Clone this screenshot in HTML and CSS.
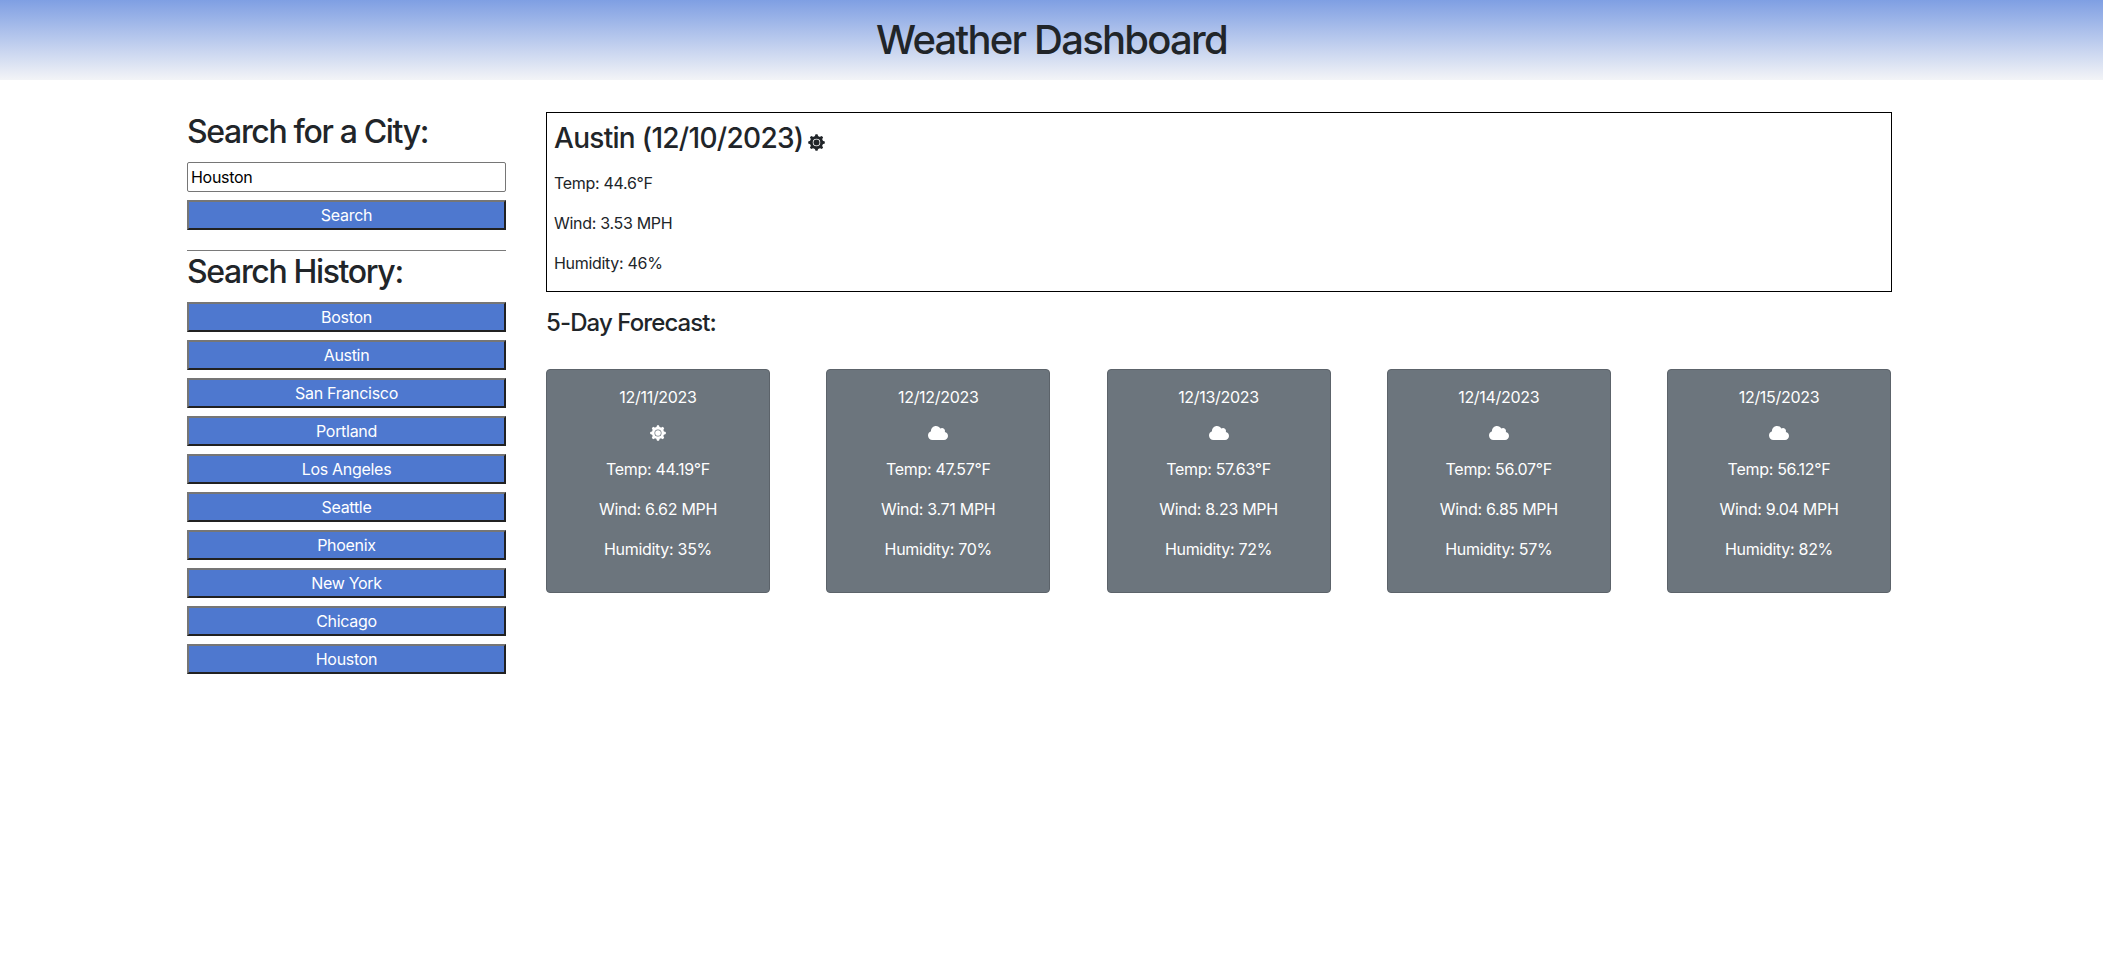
FILE: index.html
```html
<!DOCTYPE html>
<html lang="en">
<head>
    <meta charset="UTF-8">
    <meta name="viewport" content="width=device-width, initial-scale=1.0">
    <title>Weather Dashboard</title>
    <link rel="stylesheet" href="styles.css">
</head>
<body>
    <svg class="icon-defs" aria-hidden="true">
        <symbol id="sun" viewBox="0 0 512 512">
            <circle cx="256" cy="256" r="90"/>
            <circle cx="256" cy="256" r="155" fill="none" stroke="currentColor" stroke-width="84"/>
            <g id="sun-teeth">
                <path d="M226 6h60l30 84H196z"/>
                <path d="M226 6h60l30 84H196z" transform="rotate(45 256 256)"/>
                <path d="M226 6h60l30 84H196z" transform="rotate(90 256 256)"/>
                <path d="M226 6h60l30 84H196z" transform="rotate(135 256 256)"/>
                <path d="M226 6h60l30 84H196z" transform="rotate(180 256 256)"/>
                <path d="M226 6h60l30 84H196z" transform="rotate(225 256 256)"/>
                <path d="M226 6h60l30 84H196z" transform="rotate(270 256 256)"/>
                <path d="M226 6h60l30 84H196z" transform="rotate(315 256 256)"/>
            </g>
        </symbol>
        <symbol id="cloud" viewBox="0 0 640 512">
            <path d="M537.6 226.6c4.1-10.7 6.4-22.4 6.4-34.6 0-53-43-96-96-96-19.7 0-38.1 6-53.3 16.2C367 64.2 315.3 32 256 32c-88.4 0-160 71.6-160 160 0 2.7.1 5.4.2 8.1C40.2 219.8 0 273.2 0 336c0 79.5 64.5 144 144 144h368c70.7 0 128-57.3 128-128 0-61.9-44-113.6-102.4-125.4z"/>
        </symbol>
    </svg>

    <header class="page-header">
        <h1>Weather Dashboard</h1>
    </header>

    <div class="layout">
        <aside class="sidebar">
            <h2>Search for a City:</h2>
            <input class="city-input" type="text" value="Houston">
            <button class="city-btn search-btn">Search</button>
            <hr>
            <h2>Search History:</h2>
            <div class="history">
                <button class="city-btn">Boston</button>
                <button class="city-btn">Austin</button>
                <button class="city-btn">San Francisco</button>
                <button class="city-btn">Portland</button>
                <button class="city-btn">Los Angeles</button>
                <button class="city-btn">Seattle</button>
                <button class="city-btn">Phoenix</button>
                <button class="city-btn">New York</button>
                <button class="city-btn">Chicago</button>
                <button class="city-btn">Houston</button>
            </div>
        </aside>

        <main class="content">
            <section class="today">
                <h2>Austin (12/10/2023) <svg class="icon-sun-today"><use href="#sun"/></svg></h2>
                <p>Temp: 44.6°F</p>
                <p>Wind: 3.53 MPH</p>
                <p>Humidity: 46%</p>
            </section>

            <h3>5-Day Forecast:</h3>

            <div class="forecast">
                <div class="day">
                    <p>12/11/2023</p>
                    <svg class="icon icon-sun"><use href="#sun"/></svg>
                    <p>Temp: 44.19°F</p>
                    <p>Wind: 6.62 MPH</p>
                    <p>Humidity: 35%</p>
                </div>
                <div class="day">
                    <p>12/12/2023</p>
                    <svg class="icon icon-cloud"><use href="#cloud"/></svg>
                    <p>Temp: 47.57°F</p>
                    <p>Wind: 3.71 MPH</p>
                    <p>Humidity: 70%</p>
                </div>
                <div class="day">
                    <p>12/13/2023</p>
                    <svg class="icon icon-cloud"><use href="#cloud"/></svg>
                    <p>Temp: 57.63°F</p>
                    <p>Wind: 8.23 MPH</p>
                    <p>Humidity: 72%</p>
                </div>
                <div class="day">
                    <p>12/14/2023</p>
                    <svg class="icon icon-cloud"><use href="#cloud"/></svg>
                    <p>Temp: 56.07°F</p>
                    <p>Wind: 6.85 MPH</p>
                    <p>Humidity: 57%</p>
                </div>
                <div class="day">
                    <p>12/15/2023</p>
                    <svg class="icon icon-cloud"><use href="#cloud"/></svg>
                    <p>Temp: 56.12°F</p>
                    <p>Wind: 9.04 MPH</p>
                    <p>Humidity: 82%</p>
                </div>
            </div>
        </main>
    </div>
</body>
</html>
```
FILE: styles.css
```css
* {
    box-sizing: border-box;
}
body {
    margin: 0;
    font-family: Inter, "Noto Sans", sans-serif;
    font-size: 16px;
    line-height: 1.5;
    letter-spacing: -0.3px;
    color: #212529;
    background: white;
}
.icon-defs {
    display: none;
}
.page-header {
    height: 80px;
    background: linear-gradient(#7f9fe3, #f3f4f7);
    text-align: center;
}
.page-header h1 {
    margin: 0;
    font-size: 40px;
    font-weight: 500;
    line-height: 80px;
    letter-spacing: -1.75px;
}
.layout {
    display: flex;
    gap: 40px;
    padding: 32px 211px 0 187px;
}
.sidebar {
    width: 319px;
    flex-shrink: 0;
    padding-top: 1px;
}
.sidebar h2 {
    margin: 0 0 10.6px;
    font-size: 32px;
    font-weight: 500;
    line-height: 1.2;
    letter-spacing: -1.35px;
}
.sidebar hr {
    margin: 20px 0 2px;
    border: 0;
    border-top: 1px solid #7a7a7a;
}
.city-input {
    display: block;
    width: 100%;
    height: 30px;
    padding: 1px 3px;
    border: 1px solid #767676;
    border-radius: 2px;
    font: 16px Inter, "Noto Sans", sans-serif;
    letter-spacing: -0.3px;
    color: black;
}
.city-btn {
    display: block;
    width: 100%;
    height: 30px;
    padding: 0;
    border: 2px solid;
    border-color: #767676 #212121 #212121 #767676;
    background: #4e78cf;
    color: white;
    font: 16px Inter, "Noto Sans", sans-serif;
    letter-spacing: -0.3px;
}
.search-btn {
    margin-top: 8px;
}
.history {
    display: flex;
    flex-direction: column;
    gap: 8px;
}
.content {
    flex: 1;
    min-width: 0;
}
.today {
    height: 180px;
    padding: 9px 7px;
    border: 1px solid black;
}
.today h2 {
    margin: 0 0 15px;
    font-size: 28px;
    font-weight: 500;
    line-height: 1.2;
    letter-spacing: -0.7px;
}
.today p {
    margin: 0 0 16px;
}
.content h3 {
    margin: 17px 0 0;
    font-size: 24px;
    font-weight: 500;
    line-height: 1.2;
    letter-spacing: -0.9px;
}
.forecast {
    display: flex;
    justify-content: space-between;
    margin-top: 31px;
    padding-right: 1px;
}
.day {
    width: 224px;
    height: 224px;
    padding: 15px 8px;
    border: 1px solid #5c636a;
    border-radius: 4px;
    background: #6c757d;
    color: white;
    text-align: center;
}
.day p {
    margin: 0 0 16px;
}
.icon {
    display: block;
    height: 16px;
    margin: 0 auto 16px;
    fill: currentColor;
}
.icon-sun {
    width: 16px;
}
.icon-cloud {
    width: 20px;
}
.icon-sun-today {
    width: 17px;
    height: 17px;
    margin-left: -2px;
    vertical-align: -3px;
    fill: currentColor;
}
```
